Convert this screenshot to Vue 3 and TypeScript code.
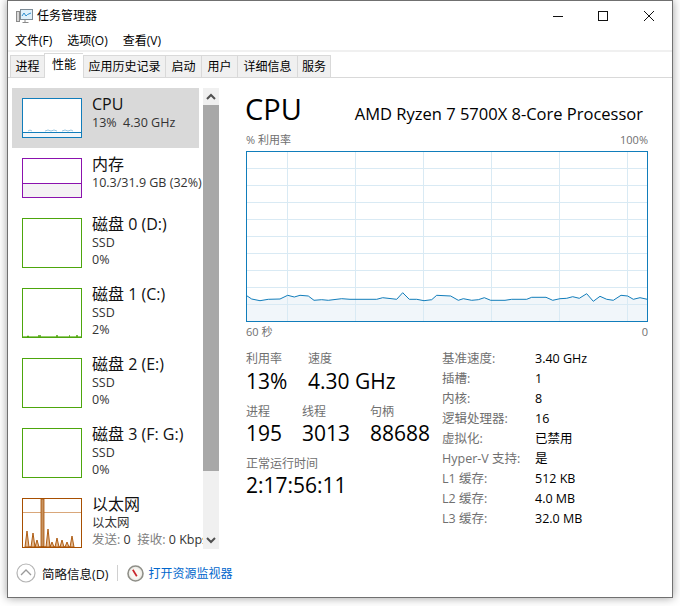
<script setup lang="ts">
const tabs = [
  { name: '进程', w: 34, active: false },
  { name: '性能', w: 39, active: true },
  { name: '应用历史记录', w: 82, active: false },
  { name: '启动', w: 36, active: false },
  { name: '用户', w: 36, active: false },
  { name: '详细信息', w: 60, active: false },
  { name: '服务', w: 34, active: false },
]
const disks = [
  { name: '磁盘 0 (D:)', val: '0%', spark: false },
  { name: '磁盘 1 (C:)', val: '2%', spark: true },
  { name: '磁盘 2 (E:)', val: '0%', spark: false },
  { name: '磁盘 3 (F: G:)', val: '0%', spark: false },
]
const specs = [
  ['基准速度:', '3.40 GHz'],
  ['插槽:', '1'],
  ['内核:', '8'],
  ['逻辑处理器:', '16'],
  ['虚拟化:', '已禁用'],
  ['Hyper-V 支持:', '是'],
  ['L1 缓存:', '512 KB'],
  ['L2 缓存:', '4.0 MB'],
  ['L3 缓存:', '32.0 MB'],
]
// sampled from the zoomed reference: [x, y] in graph-local px
const raw: [number, number][] = [
  [20,77],[35,87],[60,92],[85,88],[120,87],[143,76],[163,81],[180,76],[205,78],[222,91],[245,89],[265,91],[305,86],[330,88],[410,88],[428,83],[470,88],[488,68],[508,88],[530,88],[552,92],[575,89],[590,76],[632,78],[655,91],[670,86],[695,91],[715,89],[733,83],[752,91],[795,91],[815,88],[860,88],[875,82],[918,82],[938,91],[960,86],[980,85],[998,80],[1018,85],[1040,71],[1060,94],[1080,79],[1100,88],[1120,91],[1143,76],[1163,78],[1180,88],[1200,83],[1222,88],
]
const pts = raw.map(([x, y]) => [+(x / 3 - 6).toFixed(1), +(y / 3 + 119).toFixed(1)])
const line = pts.map((p) => p.join(',')).join(' ')
const area = `0,171 ${line} 402,171`
const vLines = [41.5, 109.5, 177.5, 245.5, 313.5, 381.5]
const hLines = [17.5, 34.5, 51.5, 68.5, 85.5, 102.5, 119.5, 136.5, 153.5]
const spikes: [number, number][] = [[4,32],[10,34],[14,41],[25,30],[29,43],[34,39],[39,41],[44,43],[49,37]]
const spikePts = spikes
  .map(([x, y]) => `${x - 2},48 ${x},${y} ${x + 2},48`)
  .join(' ')
</script>

<template>
  <div class="page">
    <div class="win">
      <header class="titlebar">
        <svg class="appicon" width="17" height="15" viewBox="0 0 17 15">
          <rect x="0.5" y="2.5" width="3" height="10" fill="#d8d8d8" stroke="#8a8a8a" />
          <rect x="4.5" y="0.5" width="12" height="10" fill="#dff0fb" stroke="#7d8b96" />
          <path d="M6 7l2-3 2 3 1.500-1.500L15 4" fill="none" stroke="#2f8fd0" />
          <path d="M9 11v2M6.500 13.500h6" stroke="#8a8a8a" fill="none" />
        </svg>
        <span class="wintitle">任务管理器</span>
        <div class="controls">
          <svg width="111" height="12" viewBox="0 0 111 12">
            <path d="M9 6.500h10" stroke="#111" fill="none" />
            <rect x="54.500" y="1.500" width="9" height="9" stroke="#111" fill="none" />
            <path d="M100 1l10 10M110 1l-10 10" stroke="#111" fill="none" />
          </svg>
        </div>
      </header>
      <nav class="menubar">
        <span>文件(F)</span><span>选项(O)</span><span>查看(V)</span>
      </nav>
      <div class="tabs">
        <div
          v-for="t in tabs"
          :key="t.name"
          class="tab"
          :class="{ active: t.active }"
          :style="{ width: t.w + 'px' }"
        >{{ t.name }}</div>
      </div>

      <div class="body">
        <aside class="side">
          <div class="list">
            <div class="item sel">
              <div class="thumb small cpu">
                <svg width="58" height="38" viewBox="0 0 58 38">
                  <rect x="0" y="33" width="58" height="5" fill="#f1f6fa" />
                  <path d="M0 33.500h58" stroke="#117dbb" />
                  <path d="M5 32l2-1 2 1M22 32l3-1 3 1 3-1 3 1M39 32l3-1 3 1 3-1 2 1" fill="none" stroke="#117dbb" stroke-opacity=".55" stroke-width=".8" />
                </svg>
              </div>
              <div class="info">
                <div class="t">CPU</div>
                <div class="s">13%&nbsp; 4.30 GHz</div>
              </div>
            </div>
            <div class="item">
              <div class="thumb small mem">
                <div class="memfill"></div>
              </div>
              <div class="info">
                <div class="t">内存</div>
                <div class="s">10.3/31.9 GB (32%)</div>
              </div>
            </div>
            <div v-for="d in disks" :key="d.name" class="item">
              <div class="thumb disk">
                <svg v-if="d.spark" width="58" height="48" viewBox="0 0 58 48">
                  <path d="M0 47.500h58" stroke="#4da60c" stroke-opacity=".6" />
                  <path d="M4 47.500h2M15 47h3M33 47h2M46 47h1M53 47h2" stroke="#4da60c" stroke-width="1.500" />
                </svg>
              </div>
              <div class="info">
                <div class="t">{{ d.name }}</div>
                <div class="s">SSD</div>
                <div class="s">{{ d.val }}</div>
              </div>
            </div>
            <div class="item">
              <div class="thumb net">
                <svg width="58" height="48" viewBox="0 0 58 48">
                  <path d="M0 13.500h58" stroke="#d9a77a" />
                  <rect x="18" y="0" width="3" height="48" fill="#c8935f" stroke="#a74f01" stroke-width=".8" />
                  <polygon :points="spikePts" fill="#e2b88f" stroke="#a74f01" stroke-width=".9" />
                </svg>
              </div>
              <div class="info">
                <div class="t">以太网</div>
                <div class="s">以太网</div>
                <div class="s"><span class="g">发送:</span> 0&nbsp; <span class="g">接收:</span> 0 Kbps</div>
              </div>
            </div>
          </div>
          <div class="scroll">
            <div class="arrow">
              <svg width="10" height="7" viewBox="0 0 10 7"><path d="M1 6l4-4 4 4" fill="none" stroke="#505050" stroke-width="2" /></svg>
            </div>
            <div class="track"><div class="bar"></div></div>
            <div class="arrow">
              <svg width="10" height="7" viewBox="0 0 10 7"><path d="M1 1l4 4 4-4" fill="none" stroke="#505050" stroke-width="2" /></svg>
            </div>
          </div>
        </aside>

        <main class="main">
          <div class="head">
            <h1>CPU</h1>
            <div class="model">AMD Ryzen 7 5700X 8-Core Processor</div>
          </div>
          <div class="axis top"><span>% 利用率</span><span>100%</span></div>
          <svg class="graph" width="402" height="171" viewBox="0 0 402 171">
            <polygon :points="area" fill="#f1f6fa" />
            <path v-for="x in vLines" :key="x" :d="`M${x} 0V171`" stroke="#d9eaf4" />
            <path v-for="y in hLines" :key="y" :d="`M0 ${y}H402`" stroke="#d9eaf4" />
            <polyline :points="line" fill="none" stroke="#117dbb" />
            <rect x="0.500" y="0.500" width="401" height="170" fill="none" stroke="#117dbb" />
          </svg>
          <div class="axis bottom"><span>60 秒</span><span>0</span></div>

          <div class="stats">
            <div class="left">
              <div class="row r1">
                <div class="stat w62"><div class="lab">利用率</div><div class="num">13%</div></div>
                <div class="stat"><div class="lab">速度</div><div class="num">4.30 GHz</div></div>
              </div>
              <div class="row r2">
                <div class="stat w56"><div class="lab">进程</div><div class="num">195</div></div>
                <div class="stat w68"><div class="lab">线程</div><div class="num">3013</div></div>
                <div class="stat"><div class="lab">句柄</div><div class="num">88688</div></div>
              </div>
              <div class="row r3">
                <div class="stat"><div class="lab">正常运行时间</div><div class="num">2:17:56:11</div></div>
              </div>
            </div>
            <div class="specs">
              <template v-for="s in specs" :key="s[0]">
                <div class="sk">{{ s[0] }}</div>
                <div class="sv">{{ s[1] }}</div>
              </template>
            </div>
          </div>
        </main>
      </div>

      <footer class="foot">
        <svg width="20" height="20" viewBox="0 0 20 20">
          <circle cx="10" cy="10" r="9" fill="#fff" stroke="#b4b4b4" stroke-width="1.200" />
          <path d="M5 12l5-5 5 5" fill="none" stroke="#9a9a9a" stroke-width="1.300" />
        </svg>
        <span class="brief">简略信息(D)</span>
        <span class="sep"></span>
        <svg width="17" height="17" viewBox="0 0 17 17">
          <circle cx="8.500" cy="8.500" r="7.500" fill="#efeeea" stroke="#8f8f88" stroke-width="1.600" />
          <circle cx="8.500" cy="8.500" r="5.200" fill="#faf8f2" />
          <path d="M5.800 4.800l4 6.400" stroke="#c9252c" stroke-width="1.700" />
        </svg>
        <span class="link">打开资源监视器</span>
      </footer>
    </div>
  </div>
</template>

<style scoped>
.page {
  width: 680px;
  height: 606px;
  padding: 0 7px 8px;
  box-sizing: border-box;
  overflow: hidden;
  background: #fff;
  font-family: "Open Sans", "Noto Sans CJK SC", sans-serif;
  font-size: 12px;
  color: #000;
}
.win {
  width: 666px;
  height: 598px;
  box-sizing: border-box;
  border: 1px solid #707070;
  background: #fff;
  box-shadow: 0 0 9px rgba(0, 0, 0, 0.38);
  display: flex;
  flex-direction: column;
}
.titlebar {
  height: 28px;
  display: flex;
  align-items: center;
  padding-left: 8px;
  flex: none;
}
.appicon { margin-right: 4px; margin-top: 3px; }
.wintitle { line-height: 29px; padding-top: 1px; }
.controls {
  margin-left: auto;
  margin-right: 17px;
  display: flex;
  margin-top: 1px;
}
.menubar {
  height: 21px;
  flex: none;
  display: flex;
  gap: 15px;
  padding-left: 7px;
  line-height: 24px;
}
.tabs {
  flex: none;
  height: 28px;
  box-sizing: border-box;
  border-top: 2px solid #f0f0f0;
  border-bottom: 1px solid #d9d9d9;
  padding-left: 2px;
  display: flex;
  align-items: flex-end;
}
.tab {
  height: 22px;
  box-sizing: border-box;
  border: 1px solid #d9d9d9;
  border-bottom: 0;
  border-right-width: 0;
  background: #f0f0f0;
  text-align: center;
  line-height: 22px;
  flex: none;
}
.tab:last-child { border-right-width: 1px; }
.tab.active {
  height: 25px;
  margin-bottom: -1px;
  background: #fff;
  line-height: 22px;
  border-right-width: 0;
  position: relative;
  z-index: 1;
}
.body {
  flex: none;
  height: 471px;
  box-sizing: border-box;
  display: flex;
  padding: 10px 0 0 4px;
}
.side {
  flex: none;
  width: 207px;
  height: 461px;
  display: flex;
}
.list {
  width: 191px;
  overflow: hidden;
  flex: none;
}
.item {
  width: 187px;
  display: flex;
  padding: 10px;
  box-sizing: border-box;
  white-space: nowrap;
}
.item.sel { background: #d9d9d9; }
.thumb {
  flex: none;
  width: 60px;
  height: 50px;
  box-sizing: border-box;
  border: 1px solid;
  background: #fff;
  display: flex;
}
.thumb.small { height: 40px; }
.thumb.cpu { border-color: #117dbb; }
.thumb.mem { border-color: #8b12ae; align-items: flex-end; }
.memfill {
  width: 100%;
  height: 13px;
  background: #f4f2f4;
  border-top: 1px solid #8b12ae;
}
.thumb.disk { border-color: #4da60c; }
.thumb.net { border-color: #a74f01; }
.info {
  margin-left: 10px;
  margin-top: -5px;
  margin-bottom: -5px;
}
.t {
  font-size: 16px;
  height: 21px;
  line-height: 22px;
  color: #111;
}
.s {
  font-size: 12.5px;
  line-height: 17px;
  color: #333;
}
.g { color: #808080; }
.scroll {
  flex: none;
  width: 16px;
  background: #f0f0f0;
  display: flex;
  flex-direction: column;
}
.arrow {
  height: 17px;
  flex: none;
  display: flex;
  align-items: center;
  justify-content: center;
}
.track { flex: 1; min-height: 0; }
.bar { height: 366px; background: #a8a8a8; }
.main {
  flex: none;
  width: 402px;
  margin-left: 27px;
  display: flex;
  flex-direction: column;
}
.head {
  display: flex;
  justify-content: space-between;
  align-items: flex-end;
  height: 44px;
  flex: none;
}
h1 {
  margin: 0 0 4px -1px;
  font-size: 29px;
  font-weight: 400;
  line-height: 38px;
}
.model {
  font-size: 16.500px;
  line-height: 24px;
  margin-right: 5px;
  margin-bottom: 6px;
}
.axis {
  display: flex;
  justify-content: space-between;
  color: #707070;
  font-size: 11px;
  line-height: 15px;
  flex: none;
}
.axis.top { margin-bottom: 4px; }
.axis.bottom { margin-top: 2px; }
.graph { display: block; flex: none; }
.stats {
  display: flex;
  margin-top: 12px;
}
.left { width: 196px; flex: none; }
.row { display: flex; }
.r2 { margin-top: 10px; }
.r2 .num { margin-top: 1px; line-height: 24px; }
.r3 { margin-top: 11px; }
.r3 .num { margin-top: 0; }
.w62 { width: 62px; }
.w56 { width: 56px; }
.w68 { width: 68px; }
.lab {
  color: #707070;
  font-size: 12px;
  line-height: 16px;
}
.num {
  font-size: 21px;
  line-height: 26px;
  margin-top: 1px;
}
.specs {
  display: grid;
  grid-template-columns: 93px auto;
  grid-auto-rows: 20px;
  font-size: 12.5px;
  line-height: 20px;
  margin-top: -2px;
}
.sk { color: #707070; }
.foot {
  flex: 1;
  display: flex;
  align-items: center;
  padding-left: 8px;
}
.brief {
  margin-left: 6px;
  font-size: 12.5px;
  color: #111;
}
.sep {
  width: 1px;
  height: 16px;
  background: #d0d0d0;
  margin: 0 9px;
}
.link {
  margin-left: 4px;
  color: #0066cc;
}
</style>

<style>
html, body { background: #fff; }
</style>
